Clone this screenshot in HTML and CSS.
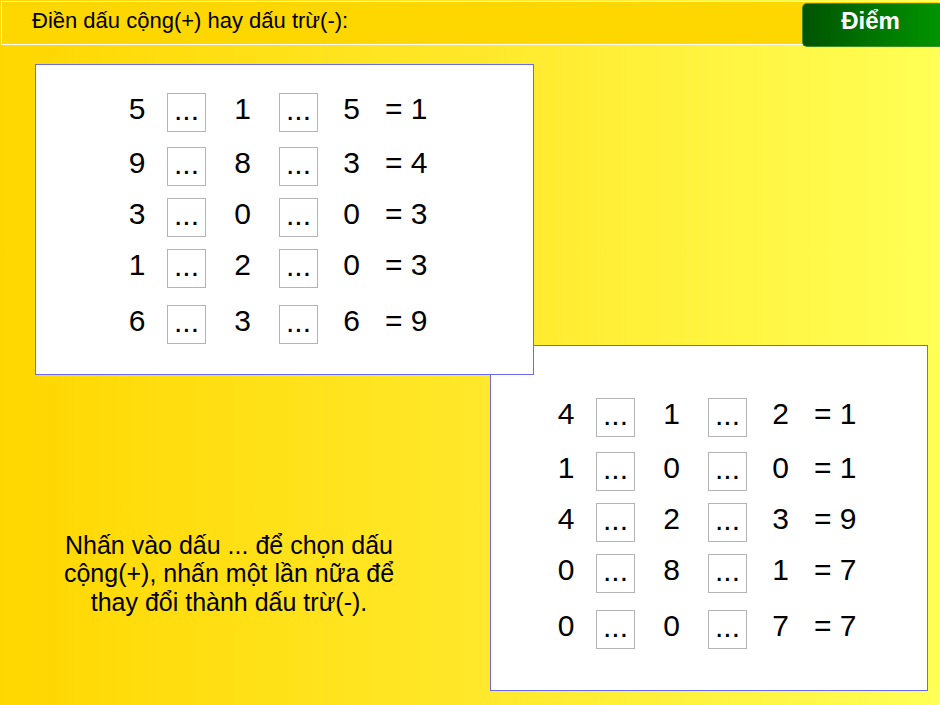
FILE: index.html
```html
<!DOCTYPE html>
<html lang="vi">
<head>
<meta charset="utf-8">
<title>Điền dấu</title>
<link rel="stylesheet" href="styles.css">
</head>
<body>
<div class="topbar">
  <div class="bar">Điền dấu cộng(+) hay dấu trừ(-):</div>
  <div class="score">Điểm</div>
</div>

<div class="panel panel-a">
  <div class="rows">
    <div class="eq"><span class="n n1">5</span><span class="box">...</span><span class="n n2">1</span><span class="box">...</span><span class="n n3">5</span><span class="res">= 1</span></div>
    <div class="eq"><span class="n n1">9</span><span class="box">...</span><span class="n n2">8</span><span class="box">...</span><span class="n n3">3</span><span class="res">= 4</span></div>
    <div class="eq"><span class="n n1">3</span><span class="box">...</span><span class="n n2">0</span><span class="box">...</span><span class="n n3">0</span><span class="res">= 3</span></div>
    <div class="eq"><span class="n n1">1</span><span class="box">...</span><span class="n n2">2</span><span class="box">...</span><span class="n n3">0</span><span class="res">= 3</span></div>
    <div class="eq"><span class="n n1">6</span><span class="box">...</span><span class="n n2">3</span><span class="box">...</span><span class="n n3">6</span><span class="res">= 9</span></div>
  </div>
</div>

<div class="lower">
  <div class="hint">Nhấn vào dấu ... để chọn dấu<br>cộng(+), nhấn một lần nữa để<br>thay đổi thành dấu trừ(-).</div>
  <div class="panel panel-b">
    <div class="rows">
      <div class="eq"><span class="n n1">4</span><span class="box">...</span><span class="n n2">1</span><span class="box">...</span><span class="n n3">2</span><span class="res">= 1</span></div>
      <div class="eq"><span class="n n1">1</span><span class="box">...</span><span class="n n2">0</span><span class="box">...</span><span class="n n3">0</span><span class="res">= 1</span></div>
      <div class="eq"><span class="n n1">4</span><span class="box">...</span><span class="n n2">2</span><span class="box">...</span><span class="n n3">3</span><span class="res">= 9</span></div>
      <div class="eq"><span class="n n1">0</span><span class="box">...</span><span class="n n2">8</span><span class="box">...</span><span class="n n3">1</span><span class="res">= 7</span></div>
      <div class="eq"><span class="n n1">0</span><span class="box">...</span><span class="n n2">0</span><span class="box">...</span><span class="n n3">7</span><span class="res">= 7</span></div>
    </div>
  </div>
</div>
</body>
</html>
```

FILE: styles.css
```css
html, body {
  margin: 0;
  padding: 0;
}
body {
  width: 940px;
  height: 705px;
  overflow: hidden;
  background: linear-gradient(to right, #ffd700 0%, #ffe82a 50%, #ffff55 100%);
  font-family: "Liberation Sans", Arial, sans-serif;
  color: #000;
}

.topbar {
  display: flex;
  align-items: flex-start;
  height: 44px;
  margin: 1px 0 0 1px;
}
.bar {
  flex: 1;
  height: 44px;
  box-sizing: border-box;
  border: 1px solid #fff;
  background: #ffd700;
  margin-right: -138px;
  padding-left: 30px;
  font-size: 22px;
  line-height: 38px;
}
.score {
  width: 138px;
  height: 44px;
  margin-top: 2px;
  box-sizing: border-box;
  border: 1px solid #3f8f1e;
  border-right: none;
  border-radius: 5px 0 0 5px;
  background: linear-gradient(to right, #005400, #009400);
  color: #fff;
  font-weight: bold;
  font-size: 24px;
  line-height: 33px;
  text-align: center;
  padding-right: 2px;
}

.panel {
  box-sizing: border-box;
  background: #fff;
  border: 1px solid #6a6af0;
}
.panel-a {
  position: relative;
  z-index: 2;
  width: 499px;
  height: 311px;
  margin: 19px 0 0 35px;
  padding: 28px 0 0 71px;
}
.lower {
  display: flex;
  margin-top: -30px;
}
.hint {
  width: 490px;
  box-sizing: border-box;
  padding: 186px 32px 0 0;
  text-align: center;
  font-size: 25px;
  line-height: 28.3px;
}
.panel-b {
  width: 438px;
  height: 346px;
  padding: 52px 0 0 45px;
}

.rows {
  display: grid;
  grid-template-rows: 54px 51px 51px 56px 39px;
}
.eq {
  display: flex;
  align-items: flex-start;
  font-size: 30px;
  line-height: 32px;
  white-space: nowrap;
}
.n {
  text-align: center;
}
.n1 { width: 60px; }
.n2 { width: 73px; }
.n3 { width: 67px; }
.box {
  width: 39px;
  height: 39px;
  box-sizing: border-box;
  border: 1px solid #b4b4b4;
  text-align: center;
}
```
